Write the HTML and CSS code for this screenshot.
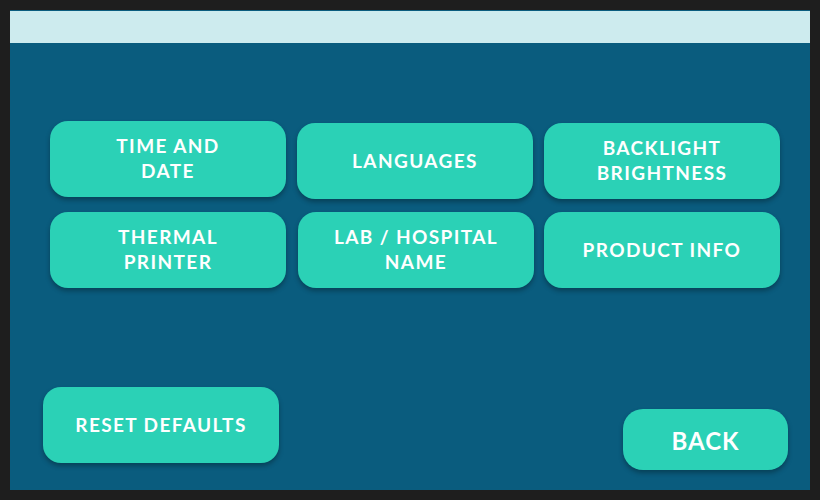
FILE: index.html
```html
<!DOCTYPE html>
<html>
<head>
<meta charset="utf-8">
<link rel="stylesheet" href="styles.css">
</head>
<body>
<div class="screen">
  <div class="topbar"></div>
  <div class="main">
    <div class="grid">
      <button class="btn btn-time">TIME AND<br>DATE</button>
      <button class="btn">LANGUAGES</button>
      <button class="btn">BACKLIGHT<br>BRIGHTNESS</button>
      <button class="btn">THERMAL<br>PRINTER</button>
      <button class="btn btn-lab">LAB / HOSPITAL<br>NAME</button>
      <button class="btn">PRODUCT INFO</button>
    </div>
    <div class="footer">
      <button class="btn btn-reset">RESET DEFAULTS</button>
      <button class="btn btn-back">BACK</button>
    </div>
  </div>
</div>
</body>
</html>
```
FILE: styles.css
```css
html, body {
  margin: 0;
  padding: 0;
  background: #1e1e1e;
}
body {
  width: 820px;
  height: 500px;
  overflow: hidden;
}
.screen {
  margin: 10px;
  width: 800px;
  height: 480px;
  background: #0a5c7e;
  display: flex;
  flex-direction: column;
}
.topbar {
  margin-top: 1px;
  height: 32px;
  background: #cdebee;
  flex: none;
}
.main {
  flex: 1;
  display: flex;
  flex-direction: column;
}
.grid {
  margin-top: 80px;
  padding-left: 40px;
  display: grid;
  grid-template-columns: repeat(3, 236px);
  grid-auto-rows: 76px;
  column-gap: 11px;
  row-gap: 13px;
}
.btn {
  border: none;
  margin: 0;
  padding: 0 0 2px 0;
  background: #2bd1b6;
  color: #ffffff;
  border-radius: 18px;
  box-shadow: 0 3px 5px rgba(0, 0, 0, 0.3);
  font-family: Lato, "Open Sans", sans-serif;
  font-weight: 700;
  font-size: 19px;
  line-height: 25px;
  letter-spacing: 1.4px;
  text-align: center;
  display: flex;
  align-items: center;
  justify-content: center;
  width: 236px;
  height: 76px;
}
.btn-time {
  margin-top: -2px;
}
.btn-lab {
  margin-left: 1px;
}
.footer {
  margin-top: auto;
  display: flex;
  justify-content: space-between;
  align-items: flex-end;
  padding: 0 22px 20px 33px;
}
.btn-reset {
  margin-bottom: 7px;
}
.btn-back {
  width: 165px;
  height: 61px;
  padding: 2px 0 0 0;
  font-size: 24px;
  letter-spacing: 1px;
  border-radius: 20px;
}
```
